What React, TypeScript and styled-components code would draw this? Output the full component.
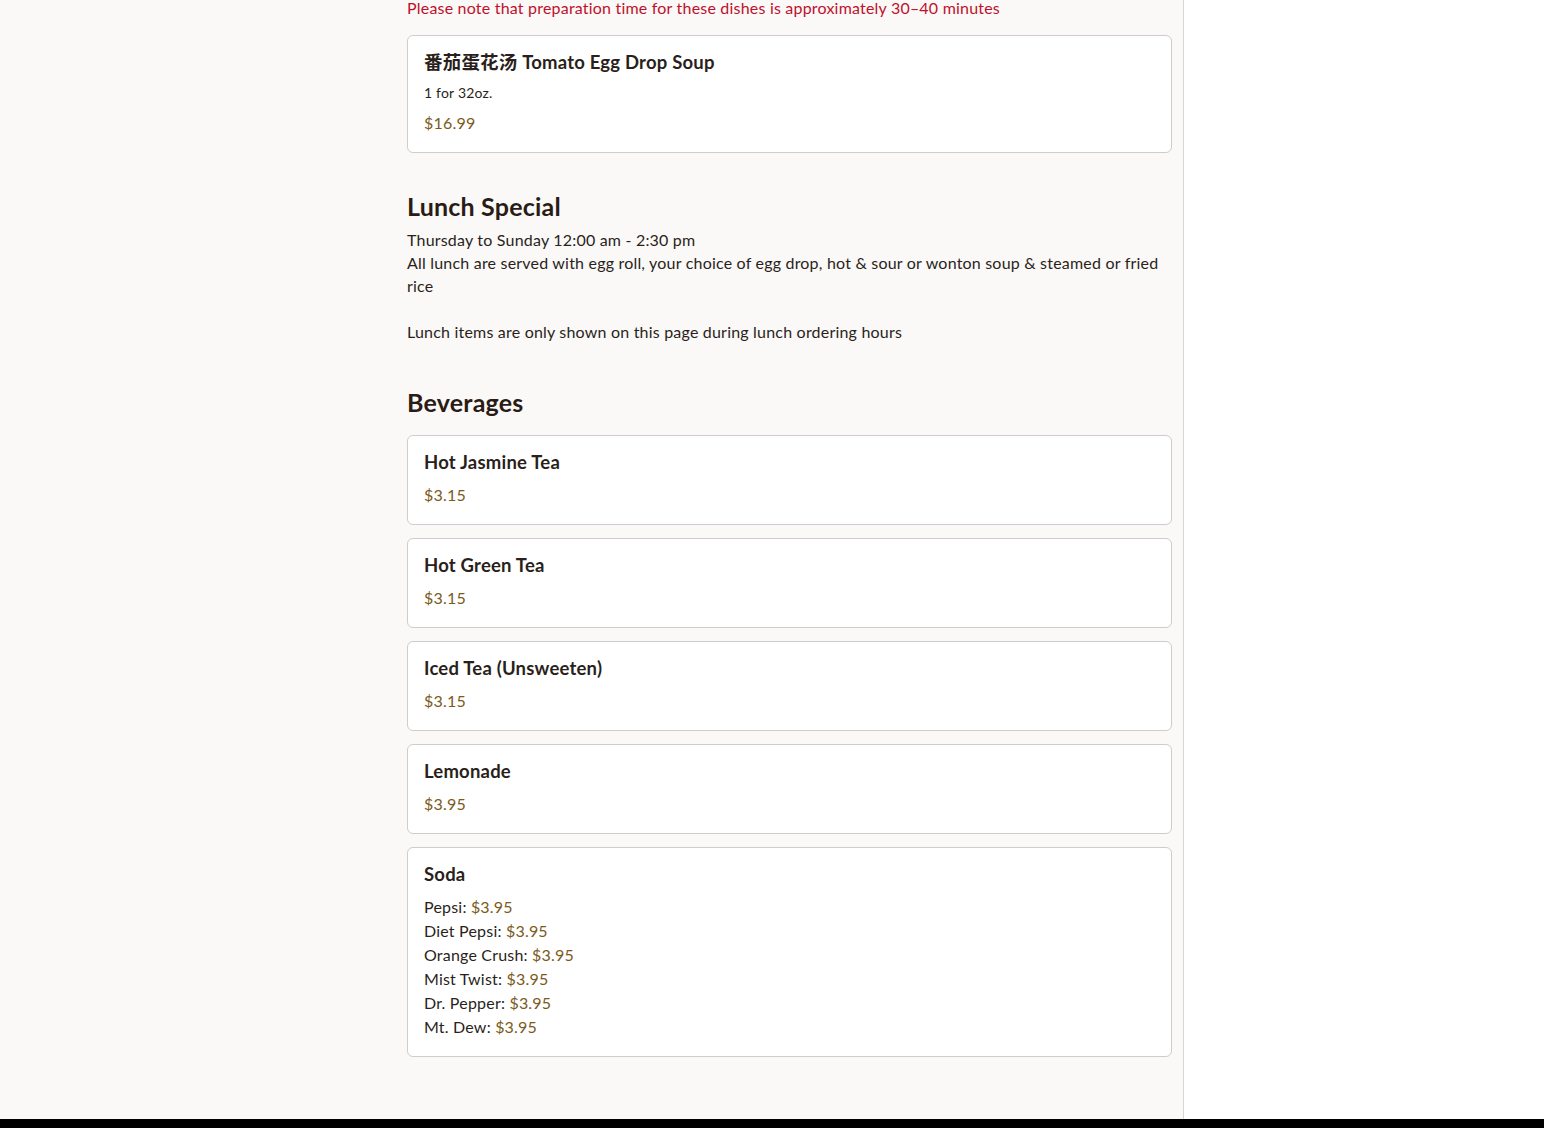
import React from "react";
import styled, {createGlobalStyle} from "styled-components";

interface Item {
  name: string;
  description?: string;
  price?: string;
  options?: {label: string; price: string}[];
}

const soupItems: Item[] = [
  {name: "番茄蛋花汤 Tomato Egg Drop Soup", description: "1 for 32oz.", price: "$16.99"},
];

const beverages: Item[] = [
  {name: "Hot Jasmine Tea", price: "$3.15"},
  {name: "Hot Green Tea", price: "$3.15"},
  {name: "Iced Tea (Unsweeten)", price: "$3.15"},
  {name: "Lemonade", price: "$3.95"},
  {
    name: "Soda",
    options: [
      {label: "Pepsi", price: "$3.95"},
      {label: "Diet Pepsi", price: "$3.95"},
      {label: "Orange Crush", price: "$3.95"},
      {label: "Mist Twist", price: "$3.95"},
      {label: "Dr. Pepper", price: "$3.95"},
      {label: "Mt. Dew", price: "$3.95"},
    ],
  },
];

const MenuCard: React.FC<{item: Item}> = ({item}) => (
  <Card>
    <CardTitle>{item.name}</CardTitle>
    {item.description && <CardDescription>{item.description}</CardDescription>}
    {item.price && <Price>{item.price}</Price>}
    {item.options && (
      <OptionList>
        {item.options.map((o) => (
          <OptionRow key={o.label}>
            {o.label}: <Price as="span">{o.price}</Price>
          </OptionRow>
        ))}
      </OptionList>
    )}
  </Card>
);

export default function App() {
  return (
    <Page>
      <GlobalStyle />
      <Main>
        <MenuPanel>
          <Aside />
          <Content>
            <Note>Please note that preparation time for these dishes is approximately 30–40 minutes</Note>
            <CardList>
              {soupItems.map((item) => <MenuCard key={item.name} item={item} />)}
            </CardList>

            <Section>
              <SectionTitle>Lunch Special</SectionTitle>
              <SectionText>
                Thursday to Sunday 12:00 am - 2:30 pm
                <br />
                All lunch are served with egg roll, your choice of egg drop, hot &amp; sour or wonton soup &amp; steamed or fried rice
                <br />
                <br />
                Lunch items are only shown on this page during lunch ordering hours
              </SectionText>
            </Section>

            <Section>
              <SectionTitle>Beverages</SectionTitle>
              <CardList>
                {beverages.map((item) => <MenuCard key={item.name} item={item} />)}
              </CardList>
            </Section>
          </Content>
        </MenuPanel>
        <CartPanel />
      </Main>
      <Footer />
    </Page>
  );
}

const GlobalStyle = createGlobalStyle`
  html, body {
    margin: 0;
    padding: 0;
    background: #ffffff;
  }
  body {
    font-family: Lato, "Noto Sans", "Noto Sans CJK SC", sans-serif;
    letter-spacing: 0.2px;
    color: #2a1f1b;
  }
  * {
    box-sizing: border-box;
  }
`;

const Page = styled.div`
  display: flex;
  flex-direction: column;
  min-height: 1128px;
`;

const Main = styled.div`
  display: grid;
  grid-template-columns: 1184px 1fr;
`;

const MenuPanel = styled.div`
  display: grid;
  grid-template-columns: 391px 765px;
  column-gap: 16px;
  background: #faf9f7;
  border-right: 1px solid #d6d6d6;
  padding-bottom: 62px;
`;

const Aside = styled.div``;

const Content = styled.div`
  display: flex;
  flex-direction: column;
`;

const CartPanel = styled.div`
  background: #ffffff;
`;

const Note = styled.p`
  margin: 0 0 20px;
  font-size: 16px;
  line-height: 15px;
  color: #c0102c;
`;

const CardList = styled.div`
  display: flex;
  flex-direction: column;
  gap: 13px;
`;

const Card = styled.div`
  background: #ffffff;
  border: 1px solid #cfcccb;
  border-radius: 6px;
  padding: 13px 16px 17px;
`;

const CardTitle = styled.div`
  font-size: 18.5px;
  line-height: 26px;
  font-weight: 700;
  color: #2a1f1b;
  margin-bottom: 8px;
`;

const CardDescription = styled.div`
  font-size: 14px;
  line-height: 20px;
  color: #2a1f1b;
  margin-bottom: 8px;
`;

const Price = styled.div`
  font-size: 16px;
  line-height: 24px;
  color: #7b5a1c;
`;

const OptionList = styled.div`
  display: flex;
  flex-direction: column;
`;

const OptionRow = styled.div`
  font-size: 16px;
  line-height: 24px;
  color: #2a1f1b;
`;

const Section = styled.section`
  margin-top: 37px;
  display: flex;
  flex-direction: column;
`;

const SectionTitle = styled.h2`
  margin: 0 0 6px;
  font-size: 25px;
  line-height: 32px;
  font-weight: 700;
  color: #2b1b16;

  & + ${CardList} {
    margin-top: 11px;
  }
`;

const SectionText = styled.p`
  margin: 0 0 6px;
  font-size: 16px;
  line-height: 23px;
  color: #2a1f1b;
`;

const Footer = styled.footer`
  height: 200px;
  background: #000000;
`;
